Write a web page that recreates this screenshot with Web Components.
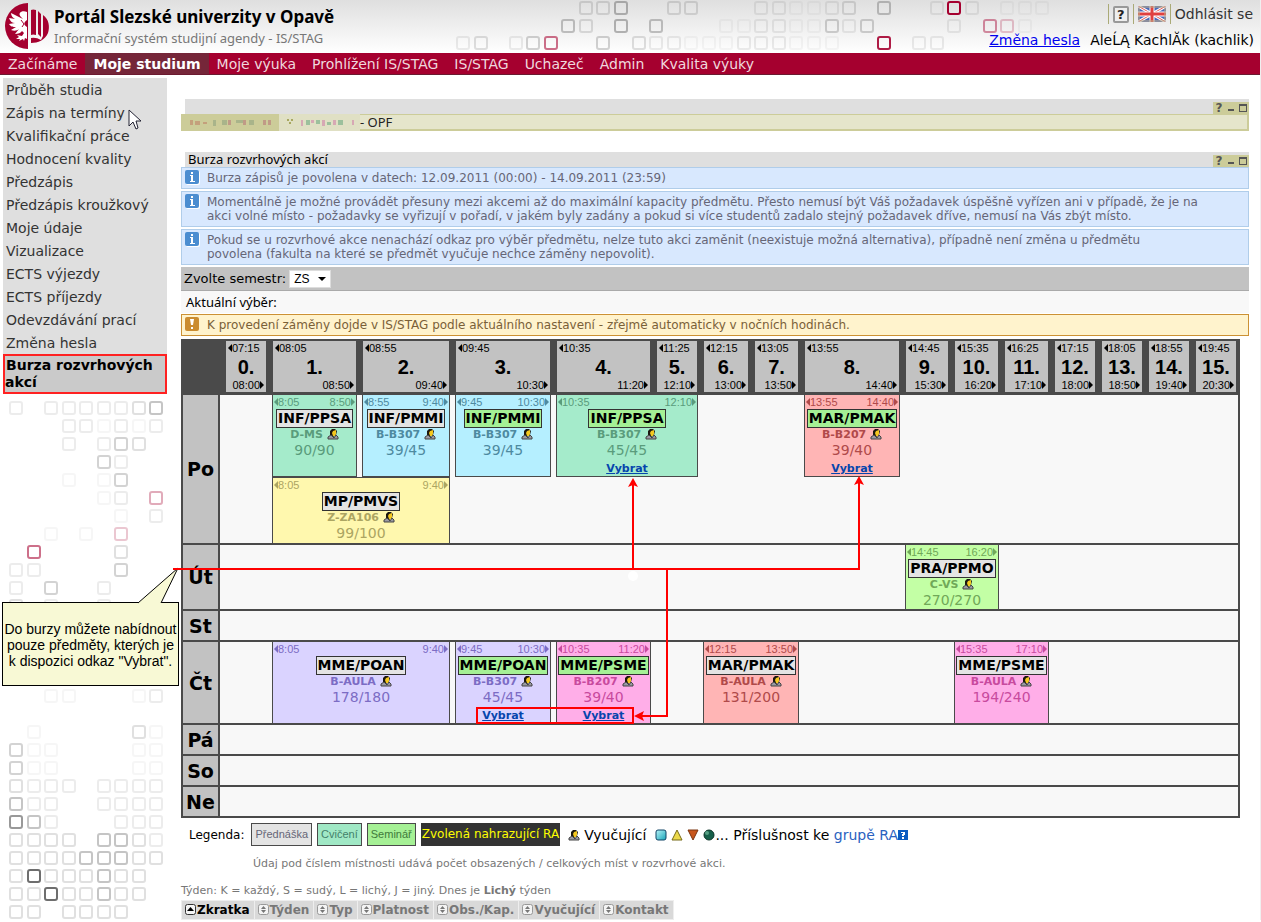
<!DOCTYPE html>
<html lang="cs">
<head>
<meta charset="utf-8">
<title>Portál Slezské univerzity v Opavě</title>
<style>
  body { margin: 0; background: #fff; color: #000; font-family: "DejaVu Sans", Verdana, sans-serif; font-size: 14px; }
</style>
</head>
<body>
<stag-app></stag-app>

<script>
const define = (name, html, setup) => {
  const template = document.createElement('template');
  template.innerHTML = html;
  customElements.define(name, class extends HTMLElement {
    constructor() {
      super();
      this.attachShadow({ mode: 'open' }).append(template.content.cloneNode(true));
    }
    connectedCallback() {
      if (setup && !this.ready) { this.ready = true; setup(this, this.shadowRoot); }
    }
  });
};

/* Decorative squares: digits are grey levels, letters a–i are crimson levels. */
const squares = (rows, x0, y0, pitchX, pitchY) => rows.map((row, r) => [...row].map((ch, c) => {
  if (ch === '.') return '';
  const pink = ch >= 'a';
  const level = pink ? (ch.charCodeAt(0) - 96) / 9 : [0.05, 0.11, 0.18, 0.26, 0.34, 0.42, 0.5, 0.6, 0.7, 0.85][+ch];
  return `<rect x="${Math.round(x0 + c * pitchX) - 6}" y="${Math.round(y0 + r * pitchY) - 6}" width="12" height="12" rx="2" fill="none" stroke="${pink ? '#a5002f' : '#555'}" stroke-opacity="${level.toFixed(2)}" stroke-width="2"/>`;
}).join('')).join('');

define('stag-squares', `
<style>:host { display: block; } svg { display: block; }</style><svg aria-hidden="true"></svg>`, (el, root) => {
  const header = el.getAttribute('kind') === 'header';
  const svg = root.querySelector('svg');
  svg.setAttribute('width', header ? 600 : 164);
  svg.setAttribute('height', header ? 53 : 520);
  svg.innerHTML = header ? squares([
    '.......225..22...110012.4..1i1.000',
    '......42.5.4...001100313....1.db0',
    '12.13e..3.211000111000..h.11'
  ], 8, 8, 17.55, 17.5) : squares([
    '1.1111124', '...110101', '...1.132', '.....31', '...0.03', '.....01.c', '......0.1',
    '..0.0.b', '.e....2', '11....3', '1.3..1', '2.1..1', '', '', '', '', '..00...01', '',
    '.0.....20', '300....00', '300....00', '2111.1111', '411..1111', '741...111',
    '2222.4421', '222244422', '29222422', '22922422', '22.2222'
  ], 13, 8, 17.55, 18);
});

define('stag-person', `
<style>:host { display: inline-block; width: 12px; height: 12px; vertical-align: -2px; } svg { display: block; }</style>
<svg width="12" height="12" viewBox="0 0 12 12" aria-hidden="true">
  <path d="M3 7V3L5 1H8L10 3L9 7L6 9Z" fill="#1c1810"/>
  <path d="M6 3L9 2V6L8 8H6L5 5Z" fill="#f4c820"/>
  <path d="M1 11V9L4 7L7 10L9 7L11 9V11Z" fill="#9a9aa4" stroke="#444" stroke-width="1"/>
</svg>`);

define('stag-logo', `
<style>:host { display: block; } svg { display: block; }</style>
<svg width="48" height="47" viewBox="0 0 48 47" role="img" aria-label="Slezská univerzita">
  <path d="M25 0A23 23 0 0 0 25 46Z" fill="#a5002f"/>
  <path d="M28 7Q30 6 33 7V32Q30 31 28 32ZM35 8L38 11V34L35 31ZM40 12C46 16 47 24 45 30C42 37 35 40 28 40V35Q33 34 38 37L40 33Z" fill="#a5002f"/>
  <path d="M24 9C19 7 14 10 18 14L20 16L8 10C8 13 10 15 12 16L6 15C7 18 9 20 12 20L6 21C8 24 10 24 13 24L8 27C11 28 14 28 16 26L12 31C15 31 18 30 19 28L21 30L19 33L14 32L16 34L13 36L17 36L16 38L20 36L21 38L22 35L24 36V24C21 22 20 20 24 17Z" fill="#fff"/>
  <path d="M18 17L21 21L19 24" fill="none" stroke="#a5002f" stroke-width="1"/>
</svg>`);

define('stag-header', `
<style>
  :host { display: block; position: relative; height: 53px; overflow: hidden; background: linear-gradient(#dfdfdf, #f2f2f2 60%, #fff); }
  stag-squares { position: absolute; left: 455px; top: 0; }
  .bar { position: relative; display: flex; height: 53px; }
  stag-logo { margin: 3px 3px 0 3px; }
  .titles { flex: 1; padding-top: 7px; }
  h1 { margin: 0; font: bold 17px/20px "Noto Sans", sans-serif; }
  p { margin: 0; font: 13px/22px "Noto Sans", sans-serif; color: #777; }
  .user { display: flex; flex-direction: column; align-items: flex-end; padding-right: 6px; }
  .tools { display: flex; align-items: center; height: 28px; }
  .tools > * { border-left: 1px solid #aaaa77; height: 20px; display: flex; align-items: center; }
  .help, .lang { padding: 0 4px; margin: 0; }
  a { color: #00e; }
  .out { color: #333; text-decoration: none; padding-left: 4px; margin-right: 1px; }
  .line { display: flex; gap: 10px; line-height: 24px; }
  button { font: bold 13px/14px "DejaVu Sans", sans-serif; width: 16px; height: 17px; padding: 0; border: 2px solid #999; border-radius: 2px; background: #eee; color: #222; }
  svg { display: block; border-radius: 2px; }
</style>
<stag-squares kind="header"></stag-squares>
<div class="bar">
  <stag-logo></stag-logo>
  <div class="titles"><h1>Portál Slezské univerzity v Opavě</h1><p>Informační systém studijní agendy - IS/STAG</p></div>
  <div class="user">
    <div class="tools">
      <span class="help"><button aria-label="Nápověda">?</button></span>
      <a class="lang" href="#" aria-label="English"><svg width="28" height="16" viewBox="0 0 28 16">
        <rect width="28" height="16" fill="#4a68b8"/>
        <path d="M0 0L28 16M28 0L0 16" stroke="#fff" stroke-width="3"/><path d="M0 0L28 16M28 0L0 16" stroke="#e05a5a" stroke-width="1"/>
        <path d="M14 0V16M0 8H28" stroke="#fff" stroke-width="5"/><path d="M14 0V16M0 8H28" stroke="#e04040" stroke-width="3"/>
        <rect x="1" y="1" width="26" height="14" fill="none" stroke="#b9a98a" stroke-opacity="0.6" stroke-width="2"/>
      </svg></a>
      <a class="out" href="#">Odhlásit se</a>
    </div>
    <div class="line"><a href="#">Změna hesla</a><span>AleĹĄ KachlĂk (kachlik)</span></div>
  </div>
</div>`);

define('stag-nav', `
<style>
  :host { display: block; background: #a5002f; border-bottom: 1px solid #6b1a30; }
  nav { display: flex; line-height: 20px; }
  a { color: #f0d8de; text-decoration: none; padding: 1px 8px 0; white-space: nowrap; }
  a.on { background: #752639; color: #fff; font-weight: bold; }
</style>
<nav>
  <a href="#">Začínáme</a><a href="#" class="on">Moje studium</a><a href="#">Moje výuka</a><a href="#">Prohlížení IS/STAG</a>
  <a href="#">IS/STAG</a><a href="#">Uchazeč</a><a href="#">Admin</a><a href="#">Kvalita výuky</a>
</nav>`);

define('stag-menu', `
<style>
  :host { display: block; background: #dfdfdf; }
  a { display: block; color: #333; text-decoration: none; line-height: 22px; padding: 1px 0 0 3px; }
  a.on { background: #cacaca; color: #000; font-weight: bold; line-height: 17px; border: 2px solid #f22; padding: 1px 0; text-indent: 1px; }
</style>
<nav>
  <a href="#">Průběh studia</a><a href="#">Zápis na termíny</a><a href="#">Kvalifikační práce</a><a href="#">Hodnocení kvality</a>
  <a href="#">Předzápis</a><a href="#">Předzápis kroužkový</a><a href="#">Moje údaje</a><a href="#">Vizualizace</a>
  <a href="#">ECTS výjezdy</a><a href="#">ECTS příjezdy</a><a href="#">Odevzdávání prací</a><a href="#">Změna hesla</a>
  <a href="#" class="on">Burza rozvrhových akcí</a>
</nav>`);

define('stag-portlet-bar', `
<style>
  :host { display: flex; align-items: flex-end; justify-content: space-between; height: 15px; margin-left: 4px; background: #dfdfdf; font: 13px/15px "Noto Sans", sans-serif; }
  .title { padding-left: 3px; }
  .buttons { display: flex; align-items: center; gap: 4px; width: 34px; height: 12px; background: #cccc99; padding-left: 2px; }
  button { border: 0; padding: 0; background: none; width: 8px; height: 12px; color: #555; font: bold 12px/12px "DejaVu Sans", sans-serif; }
  svg { display: block; }
</style>
<span class="title"><slot></slot></span>
<span class="buttons">
  <button aria-label="Nápověda">?</button>
  <button aria-label="Minimalizovat"><svg width="8" height="12"><rect x="1" y="7" width="6" height="2" fill="#555"/></svg></button>
  <button aria-label="Maximalizovat"><svg width="8" height="12"><path d="M0 2H8V10H0ZM1 4V9H7V4Z" fill="#555" fill-rule="evenodd"/></svg></button>
</span>`);

define('stag-student', `
<style>
  :host { display: flex; height: 17px; background: #e5e5cb; font: 13px/17px "Noto Sans", sans-serif; color: #222; box-shadow: inset 0 1px #cccc99, inset 0 -2px #cccc99, inset -2px 0 #cccc99; }
  .tab { width: 98px; background: #cccc99; }
  .name { width: 81px; background: #e0e0c4; }
  svg { display: block; }
</style>
<span class="tab"><svg width="98" height="17" aria-hidden="true">
  <g fill="#c4a07c"><rect x="9" y="6" width="3" height="5"/><rect x="14" y="7" width="5" height="4"/><rect x="22" y="8" width="4" height="2"/></g>
  <g fill="#a9b48a"><rect x="32" y="6" width="3" height="6"/><rect x="41" y="6" width="5" height="5"/><rect x="55" y="6" width="7" height="3"/><rect x="68" y="6" width="5" height="5"/></g>
  <g fill="#c09a86"><rect x="47" y="6" width="3" height="5"/><rect x="62" y="6" width="3" height="5"/><rect x="82" y="6" width="3" height="5"/><rect x="87" y="6" width="3" height="5"/></g></svg></span>
<span class="name"><svg width="80" height="17" aria-hidden="true">
  <g fill="#a8a860"><rect x="8" y="5" width="2" height="2"/><rect x="12" y="5" width="2" height="2"/><rect x="10" y="8" width="2" height="2"/></g>
  <g fill="#d7a8b4"><rect x="22" y="6" width="2" height="6"/><rect x="32" y="6" width="3" height="3"/><rect x="43" y="6" width="3" height="6"/><rect x="54" y="6" width="3" height="5"/><rect x="73" y="6" width="2" height="5"/></g>
  <g fill="#9cc09c"><rect x="27" y="6" width="4" height="5"/><rect x="37" y="6" width="4" height="4"/><rect x="48" y="8" width="4" height="3"/><rect x="59" y="6" width="5" height="5"/></g></svg></span>
<span>- OPF</span>`);

define('stag-message', `
<style>
  :host { display: flex; gap: 7px; padding: 2px 3px; margin-bottom: 2px; border: 1px solid #b0cdea; background: #d8e8fe; color: #667; font-size: 12px; line-height: 14px; }
  :host([kind="warn"]) { background: #fff3cd; border-color: #cc9134; color: #7a6038; margin-bottom: 3px; }
  svg { flex: none; }
  span { padding: 1px 0; }
</style>
<svg width="15" height="15" aria-hidden="true"><rect x="1" y="1" width="14" height="14" rx="2" fill="#fff"/><rect width="14" height="14" rx="2" fill="#4b8dd0"/><path d="M6 2H8V4H6ZM5 5H8V11H10V12H5V11H6V6H5Z" fill="#fff"/></svg>
<span><slot></slot></span>`, (el, root) => {
  if (el.getAttribute('kind') === 'warn') {
    root.querySelector('svg').innerHTML = '<rect width="14" height="14" rx="2" fill="#cb8c30"/><path d="M5 2H9L8 8H6ZM6 10H8V12H6Z" fill="#fff"/>';
  }
});

define('stag-semester', `
<style>
  :host { display: flex; align-items: center; gap: 3px; height: 23px; padding: 0 3px; background: #c2c2c2; border-bottom: 1px solid #aaa; font-size: 13px; }
  .pick { display: grid; }
  .pick > * { grid-area: 1 / 1; }
  select { appearance: none; width: 42px; height: 18px; padding: 0 4px; border: 1px solid #ddd; border-radius: 0; background: #fff; font: 12px/16px "Liberation Sans", sans-serif; color: #000; }
  svg { place-self: center end; margin-right: 5px; pointer-events: none; }
</style>
<label for="s">Zvolte semestr:</label>
<span class="pick"><select id="s"><option>ZS</option></select><svg width="8" height="4"><path d="M0 0H8L4 4Z"/></svg></span>`);

define('stag-event', `
<style>
  :host { display: block; box-sizing: border-box; margin: 0 3px 0 2px; height: 82px; border: solid #4a4a4a; border-width: 0 1px 1px; color: var(--ink); background: var(--fill); text-align: center; overflow: hidden; }
  :host([low]) { border-width: 1px 1px 0; height: 66px; }
  :host([flat]) { border-bottom: 0; height: 64px; }
  :host([full]) { border-bottom: 0; height: 81px; }
  .times { display: flex; justify-content: space-between; padding: 0 1px; font: 11px/14px "Liberation Sans", sans-serif; }
  .times span { display: flex; align-items: center; }
  .name { display: inline-block; border: 1px solid #333; background: #e4e4e4; color: #000; font-weight: bold; font-size: 14px; line-height: 17px; padding: 0 1px; white-space: nowrap; }
  :host([seminar]) .name { background: #a5f095; }
  .box { display: flex; justify-content: center; height: 19px; }
  .room { font-weight: bold; font-size: 11px; line-height: 14px; white-space: nowrap; }
  .count { font-size: 14px; line-height: 16px; }
  a { display: block; color: #0645ad; font-weight: bold; font-size: 11px; line-height: 14px; margin-top: 4px; }
</style>
<div class="times"><span><svg width="4" height="8"><path d="M4 0V8L0 4Z" fill="currentColor"/></svg><b-t></b-t></span><span><e-t></e-t><svg width="4" height="8"><path d="M0 0V8L4 4Z" fill="currentColor"/></svg></span></div>
<div class="box"><span class="name"><slot></slot></span></div>
<div class="room"><span></span> <stag-person></stag-person></div>
<div class="count"></div>`, (el, root) => {
  const get = n => el.getAttribute(n);
  root.querySelector('b-t').textContent = get('from');
  root.querySelector('e-t').textContent = get('to');
  root.querySelector('.room span').textContent = get('room');
  root.querySelector('.count').textContent = get('count');
  if (el.hasAttribute('pick')) {
    const a = document.createElement('a');
    a.href = '#';
    a.textContent = 'Vybrat';
    root.append(a);
  }
  const tones = {
    green: ['#a5ebcb', '#5a9c7c'], blue: ['#b5efff', '#4e8aa0'], yellow: ['#fff8ae', '#aca562'],
    red: ['#ffb5b5', '#b04a4a'], lime: ['#c3ffa5', '#70a858'], violet: ['#dad3ff', '#7c6cc4'], pink: ['#ffaee8', '#c84a9e']
  }[get('tone')];
  el.style.setProperty('--fill', tones[0]);
  el.style.setProperty('--ink', tones[1]);
});

define('stag-timetable', `
<style>
  :host { display: block; margin-right: 9px; }
  table { width: 100%; table-layout: fixed; border-collapse: separate; border-spacing: 0; border-left: 2px solid #4a4a4a; border-right: 2px solid #4a4a4a; box-sizing: border-box; }
  th, td { padding: 0; }
  thead th { background: #4a4a4a; height: 56px; }
  .hour { height: 51px; margin: 0 4px 1px 3px; background: #c2c2c2; font: 11px/14px "Liberation Sans", sans-serif; display: flex; flex-direction: column; justify-content: space-between; }
  .first { margin-left: 6px; }
  .last { margin-right: 2px; }
  .hour span { display: flex; align-items: center; padding: 0 2px; }
  .hour .to { justify-content: flex-end; }
  .hour b { font-size: 20px; line-height: 22px; }
  tbody th { background: #c2c2c2; font-size: 19px; border-right: 2px solid #4a4a4a; border-bottom: 2px solid #4a4a4a; }
  tbody td { background: #f8f8f8; vertical-align: top; border-bottom: 2px solid #4a4a4a; }
  .top td { border-bottom: 0; height: 82px; }
  .second td { height: 65px; }
  .short td { height: 29px; }
  .ut td { height: 64px; }
  .ct td { height: 81px; }
</style>
<table>
  <colgroup></colgroup>
  <thead><tr><th></th></tr></thead>
  <tbody>
    <tr class="top"><th rowspan="2" scope="row">Po</th><td></td>
      <td><stag-event tone="green" from="8:05" to="8:50" room="D-MS" count="90/90">INF/PPSA</stag-event></td>
      <td><stag-event tone="blue" from="8:55" to="9:40" room="B-B307" count="39/45">INF/PMMI</stag-event></td>
      <td><stag-event tone="blue" seminar from="9:45" to="10:30" room="B-B307" count="39/45">INF/PMMI</stag-event></td>
      <td colspan="2"><stag-event tone="green" seminar pick from="10:35" to="12:10" room="B-B307" count="45/45">INF/PPSA</stag-event></td>
      <td></td><td></td>
      <td><stag-event tone="red" seminar pick from="13:55" to="14:40" room="B-B207" count="39/40">MAR/PMAK</stag-event></td>
      <td colspan="7"></td></tr>
    <tr class="second"><td></td>
      <td colspan="2"><stag-event low tone="yellow" from="8:05" to="9:40" room="Z-ZA106" count="99/100">MP/PMVS</stag-event></td>
      <td colspan="13"></td></tr>
    <tr class="ut"><th scope="row">Út</th><td colspan="9"></td>
      <td colspan="2"><stag-event flat tone="lime" from="14:45" to="16:20" room="C-VS" count="270/270">PRA/PPMO</stag-event></td>
      <td colspan="5"></td></tr>
    <tr class="short"><th scope="row">St</th><td colspan="16"></td></tr>
    <tr class="ct"><th scope="row">Čt</th><td></td>
      <td colspan="2"><stag-event full tone="violet" from="8:05" to="9:40" room="B-AULA" count="178/180">MME/POAN</stag-event></td>
      <td><stag-event full tone="violet" seminar pick from="9:45" to="10:30" room="B-B307" count="45/45">MME/POAN</stag-event></td>
      <td><stag-event full tone="pink" seminar pick from="10:35" to="11:20" room="B-B207" count="39/40">MME/PSME</stag-event></td>
      <td></td>
      <td colspan="2"><stag-event full tone="red" from="12:15" to="13:50" room="B-AULA" count="131/200">MAR/PMAK</stag-event></td>
      <td></td><td></td>
      <td colspan="2"><stag-event full tone="pink" from="15:35" to="17:10" room="B-AULA" count="194/240">MME/PSME</stag-event></td>
      <td colspan="4"></td></tr>
    <tr class="short"><th scope="row">Pá</th><td colspan="16"></td></tr>
    <tr class="short"><th scope="row">So</th><td colspan="16"></td></tr>
    <tr class="short"><th scope="row">Ne</th><td colspan="16"></td></tr>
  </tbody>
</table>`, (el, root) => {
  const widths = [37, 50, 90, 93, 101, 100, 47, 51, 50, 101, 49, 50, 50, 47, 47, 47, 45];
  root.querySelector('colgroup').innerHTML = widths.map(w => `<col style="width:${w}px">`).join('');
  const hours = ['07:15 08:00', '08:05 08:50', '08:55 09:40', '09:45 10:30', '10:35 11:20', '11:25 12:10', '12:15 13:00', '13:05 13:50', '13:55 14:40',
    '14:45 15:30', '15:35 16:20', '16:25 17:10', '17:15 18:00', '18:05 18:50', '18:55 19:40', '19:45 20:30'];
  root.querySelector('thead tr').insertAdjacentHTML('beforeend', hours.map((h, i) => {
    const [from, to] = h.split(' ');
    const edge = i === 0 ? ' first' : i === 15 ? ' last' : '';
    return `<th scope="col"><div class="hour${edge}"><span><svg width="4" height="8"><path d="M4 0V8L0 4Z"/></svg>${from}</span><b>${i}.</b><span class="to">${to}<svg width="4" height="8"><path d="M0 0V8L4 4Z"/></svg></span></div></th>`;
  }).join(''));
});

define('stag-legend', `
<style>
  :host { display: block; }
  .row { display: flex; align-items: center; height: 23px; margin: 5px 0 0 8px; font-size: 12px; white-space: nowrap; }
  .chip { border: 1px solid #4a4a4a; box-sizing: border-box; height: 23px; padding: 0 3px; margin-right: 5px; font: 11px/20px "Liberation Sans", sans-serif; }
  .lec { background: #e4e4e4; color: #667; margin-left: 7px; }
  .ex { background: #a0e8c5; color: #42806a; }
  .sem { background: #a5f095; color: #3e7a3a; }
  .sel { background: #333; color: #ff0; padding: 0 1px; line-height: 23px; }
  .big { font-size: 14px; }
  .who { margin: 0 9px 0 4px; }
  stag-person { margin-left: 8px; }
  a { color: #2a62c0; text-decoration: none; }
  p { margin: 0; color: #777; font-size: 11px; line-height: 14px; }
  .seats { padding: 11px 0 13px 72px; }
</style>
<div class="row"><span>Legenda:</span>
  <span class="chip lec">Přednáška</span><span class="chip ex">Cvičení</span><span class="chip sem">Seminář</span>
  <span class="sel">Zvolená nahrazující RA</span>
  <stag-person></stag-person><span class="big who">Vyučující</span>
  <svg width="60" height="13" aria-hidden="true">
    <defs><linearGradient id="a" x2="1" y2="1"><stop stop-color="#b8f4f8"/><stop offset="1" stop-color="#18a4b8"/></linearGradient></defs>
    <rect x="1" y="2" width="10" height="10" rx="2" fill="url(#a)" stroke="#146"/>
    <path d="M22 2L27 12H17Z" fill="#ecd94a" stroke="#776a18"/>
    <path d="M33 2H43L38 12Z" fill="#c8561c" stroke="#7a3410"/>
    <circle cx="54" cy="7" r="5" fill="#17604a" stroke="#0c3428"/><circle cx="52" cy="5" r="2" fill="#57a084"/></svg>
  <span class="big">... Příslušnost ke <a href="#">grupě RA</a></span>
  <svg width="10" height="10" aria-hidden="true"><rect width="10" height="10" fill="#0c5cc0"/><path d="M3 2H7V5H6V6H4V4H5V3H3ZM4 7H6V9H4Z" fill="#fff"/></svg>
</div>
<p class="seats">Údaj pod číslem místnosti udává počet obsazených / celkových míst v rozvrhové akci.</p>
<p>Týden: K = každý, S = sudý, L = lichý, J = jiný. Dnes je <b>Lichý</b> týden</p>`);

define('stag-columns', `
<style>
  :host { display: block; margin-top: 2px; }
  table { border-spacing: 1px; background: #eee; }
  th { padding: 0 4px 0 3px; background: #d9d9d9; font-size: 12px; line-height: 18px; white-space: nowrap; }
  a { color: #777; text-decoration: none; }
  .on a { color: #000; }
  svg { vertical-align: -1px; margin-right: 1px; }
</style>
<table><thead><tr></tr></thead></table>`, (el, root) => {
  root.querySelector('tr').innerHTML = ['Zkratka', 'Týden', 'Typ', 'Platnost', 'Obs./Kap.', 'Vyučující', 'Kontakt'].map((t, i) =>
    `<th scope="col" class="${i ? '' : 'on'}"><a href="#"><svg width="11" height="11"><rect x="0.5" y="0.5" width="10" height="10" rx="2" fill="#f4f4f4" stroke="${i ? '#999' : '#333'}"/>${i ? '<path d="M3 5L5.500 2L8 5ZM3 6L5.500 9L8 6Z" fill="#777"/>' : '<path d="M2 7L5.500 3L9 7Z"/>'}</svg>${t}</a></th>`).join('');
});

/* Tutorial marks drawn over the timetable. */
define('stag-notes', `
<style>
  :host { position: absolute; left: 0; top: 0; pointer-events: none; }
  svg { display: block; }
  p { position: absolute; left: 2px; top: 603px; box-sizing: border-box; width: 177px; height: 83px; padding-top: 18px; margin: 0; text-align: center; font: 14px/16px "Liberation Sans", sans-serif; white-space: nowrap; }
</style>
<svg width="900" height="740" aria-hidden="true">
  <rect x="2" y="602" width="176" height="83" fill="#f8f9d5" stroke="#000" shape-rendering="crispEdges"/>
  <path d="M138 603L178 568L161 603Z" fill="#f8f9d5"/><path d="M138 603L178 568L161 603" fill="none" stroke="#000"/>
  <circle cx="633" cy="576" r="5" fill="#fff"/>
  <g fill="none" stroke="#f00" stroke-width="2">
    <path d="M173 569H859V482M633 569V484M667 569V716H640"/>
    <rect x="477" y="708" width="156" height="15"/>
  </g>
  <path d="M633 478L638 487L633 485L628 487ZM859 476L864 485L859 483L854 485ZM634 716L644 711L642 716L644 721Z" fill="#f00"/>
  <path d="M129 110V126L133 122L136 129L138 128L136 121H141Z" fill="#fff" stroke="#223"/>
</svg>
<p>Do burzy můžete nabídnout<br>pouze předměty, kterých je<br>k dispozici odkaz "Vybrat".</p>`);

define('stag-app', `
<style>
  :host { display: block; position: relative; border-right: 1px solid #f0f0f0; }
  .page { display: grid; grid-template-columns: 164px minmax(0, 1fr); column-gap: 14px; padding: 3px 11px 0 3px; }
  stag-squares { margin-top: 6px; }
  main { padding-top: 21px; }
  stag-student { margin-bottom: 21px; }
  .current { height: 22px; margin-bottom: 1px; line-height: 22px; padding-left: 5px; background: #f8f8f8; font-size: 13px; font-family: "Noto Sans", sans-serif; }
</style>
<stag-header></stag-header>
<stag-nav></stag-nav>
<div class="page">
  <aside><stag-menu></stag-menu><stag-squares></stag-squares></aside>
  <main>
    <stag-portlet-bar></stag-portlet-bar>
    <stag-student></stag-student>
    <stag-portlet-bar>Burza rozvrhových akcí</stag-portlet-bar>
    <stag-message>Burza zápisů je povolena v datech: 12.09.2011 (00:00) - 14.09.2011 (23:59)</stag-message>
    <stag-message>Momentálně je možné provádět přesuny mezi akcemi až do maximální kapacity předmětu. Přesto nemusí být Váš požadavek úspěšně vyřízen ani v případě, že je na<br>akci volné místo - požadavky se vyřizují v pořadí, v jakém byly zadány a pokud si více studentů zadalo stejný požadavek dříve, nemusí na Vás zbýt místo.</stag-message>
    <stag-message>Pokud se u rozvrhové akce nenachází odkaz pro výběr předmětu, nelze tuto akci zaměnit (neexistuje možná alternativa), případně není změna u předmětu<br>povolena (fakulta na které se předmět vyučuje nechce záměny nepovolit).</stag-message>
    <stag-semester></stag-semester>
    <div class="current">Aktuální výběr:</div>
    <stag-message kind="warn">K provedení záměny dojde v IS/STAG podle aktuálního nastavení - zřejmě automaticky v nočních hodinách.</stag-message>
    <stag-timetable></stag-timetable>
    <stag-legend></stag-legend>
    <stag-columns></stag-columns>
  </main>
</div>
<stag-notes></stag-notes>`);
</script>
</body>
</html>
